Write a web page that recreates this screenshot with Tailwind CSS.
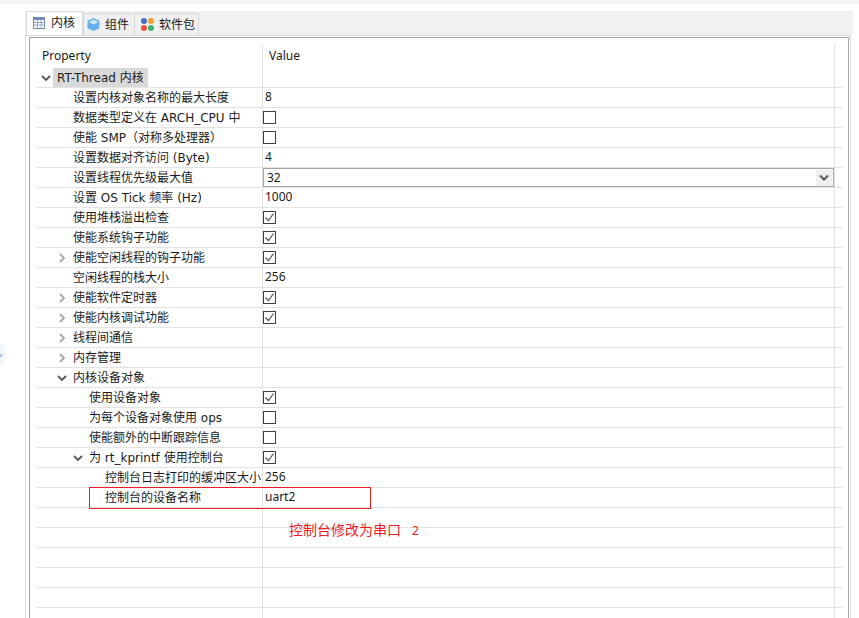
<!DOCTYPE html>
<html lang="zh-CN">
<head>
    <meta charset="UTF-8">
    <title>RT-Thread Settings</title>
    <script src="https://cdn.jsdelivr.net/npm/@tailwindcss/browser@4"></script>
</head>
<body class="bg-white">
<div class="relative w-[859px] h-[618px] overflow-hidden bg-white text-[12px] leading-[20px] text-[#1a1a1a] font-['Noto_Sans','Noto_Sans_CJK_SC',sans-serif]">
    <div class="h-1 bg-[#f4f5fb]"></div>

    <!-- panel -->
    <div class="mt-[7px] ml-[25px] w-[828px] h-[607px] flex flex-col bg-white">
        <!-- tabs -->
        <div class="h-[24px] bg-[#f0f0f0] flex items-end pl-px shrink-0">
            <div class="w-[57px] h-[24px] bg-white border border-b-0 border-[#d9d9d9] flex items-center gap-[6px] pl-[6px] pb-[2px]">
                <svg width="12" height="12" viewBox="0 0 12 12"><rect width="12" height="12" fill="#6f8db8"/><rect x="1" y="3" width="10" height="8" fill="#fff"/><path d="M1 5.500h10M1 8h10M4.500 3v8M8 3v8" stroke="#8fa6c8"/></svg>
                <span>内核</span>
            </div>
            <div class="w-[52px] h-[22px] border border-b-0 border-[#d9d9d9] flex items-center gap-[5px] pl-[3px]">
                <svg width="13" height="13" viewBox="0 0 13 13"><path d="M6.500 .5 12 3v7l-5.500 2.500L1 10V3Z" fill="#63b0ec" stroke="#63b0ec" stroke-linejoin="round"/><path d="M6.500 1.500 11.500 4 6.500 6.500 1.500 4Z" fill="#cfe8fa"/></svg>
                <span>组件</span>
            </div>
            <div class="w-[64px] h-[22px] border border-b-0 border-l-0 border-[#d9d9d9] flex items-center gap-[5px] pl-[6px]">
                <svg width="13" height="13" viewBox="0 0 13 13"><circle cx="3" cy="3" r="3" fill="#3f6fc4"/><circle cx="10" cy="3" r="3" fill="#f2a32c"/><circle cx="3" cy="10" r="3" fill="#e9503f"/><circle cx="10" cy="10" r="3" fill="#3db36b"/></svg>
                <span>软件包</span>
            </div>
        </div>

        <!-- tab body -->
        <div class="flex-1 mr-[2px] border-t border-x border-[#dcdcdc] pl-[3px] pr-px pt-px">
            <div class="h-full border-t border-x border-[#a6a6a6] pl-[6px] pt-[6px]">
                <div class="w-[806px]">
                    <!-- header -->
                    <div class="grid grid-cols-[226px_1px_571px_1px_7px] h-[24px]">
                        <div class="pl-[6px] pt-[2px]">Property</div>
                        <div class="bg-[#e3e3e3]"></div>
                        <div class="pl-[6px] pt-[2px]">Value</div>
                        <div class="bg-[#e3e3e3]"></div>
                        <div></div>
                    </div>
                    <div id="rows"></div>
                    <!-- divider runs on below the last line -->
                    <div class="grid grid-cols-[226px_1px_571px_1px_7px] h-[20px]">
                        <div></div>
                        <div class="bg-[#e3e3e3]"></div>
                        <div></div>
                        <div class="bg-[#e3e3e3]"></div>
                        <div></div>
                    </div>
                </div>
            </div>
        </div>
    </div>

    <!-- faint handle on the left edge -->
    <div class="absolute left-0 top-[344px] w-[5px] h-[22px] rounded-r-full bg-[#f3f6fb]"></div>
    <div class="absolute left-0 top-[354px] w-[2px] h-[3px] bg-[#a9c4e4]"></div>

    <!-- red annotation -->
    <div class="absolute left-[289px] top-[520px] text-[14px] text-[#ec1c24] whitespace-pre">控制台修改为串口   <span class="text-[12px]">2</span></div>
    <div class="absolute left-[89px] top-[487px] w-[282px] h-[22px] border border-[#ec1c24]"></div>
</div>

<script>
    // level, label, type of value, value, expander
    const rows = [
        [0, 'RT-Thread 内核', '', '', 'open'],
        [1, '设置内核对象名称的最大长度', 'text', '8'],
        [1, '数据类型定义在 ARCH_CPU 中', 'box', false],
        [1, '使能 SMP（对称多处理器）', 'box', false],
        [1, '设置数据对齐访问 (Byte)', 'text', '4'],
        [1, '设置线程优先级最大值', 'combo', '32'],
        [1, '设置 OS Tick 频率 (Hz)', 'text', '1000'],
        [1, '使用堆栈溢出检查', 'box', true],
        [1, '使能系统钩子功能', 'box', true],
        [1, '使能空闲线程的钩子功能', 'box', true, 'closed'],
        [1, '空闲线程的栈大小', 'text', '256'],
        [1, '使能软件定时器', 'box', true, 'closed'],
        [1, '使能内核调试功能', 'box', true, 'closed'],
        [1, '线程间通信', '', '', 'closed'],
        [1, '内存管理', '', '', 'closed'],
        [1, '内核设备对象', '', '', 'open'],
        [2, '使用设备对象', 'box', true],
        [2, '为每个设备对象使用 ops', 'box', false],
        [2, '使能额外的中断跟踪信息', 'box', false],
        [2, '为 rt_kprintf 使用控制台', 'box', true, 'open'],
        [3, '控制台日志打印的缓冲区大小', 'text', '256'],
        [3, '控制台的设备名称', 'text', 'uart2'],
        [1, '', '', ''], [1, '', '', ''], [1, '', '', ''], [1, '', '', ''], [1, '', '', '']
    ];

    const chevronOpen = '<svg width="10" height="10" viewBox="0 0 10 10" class="shrink-0 -translate-x-px"><path d="M1 3l4 4 4-4" fill="none" stroke="#555" stroke-width="1.800"/></svg>';
    const chevronClosed = '<svg width="10" height="10" viewBox="0 0 10 10" class="shrink-0 -translate-x-px"><path d="M3 1l4 4-4 4" fill="none" stroke="#a8a8a8" stroke-width="1.800"/></svg>';
    const tick = '<svg width="11" height="11" viewBox="0 0 11 11"><path d="M1.500 5.500l3 3 5-7" fill="none" stroke="#555" stroke-width="1.200"/></svg>';

    function valueCell(type, value) {
        if (type === 'text') return `<div class="pl-[2px] -translate-y-px">${value}</div>`;
        if (type === 'box') return `<div class="pt-[3px]"><div class="w-[13px] h-[13px] border border-[#333f4d] flex items-center justify-center">${value ? tick : ''}</div></div>`;
        if (type === 'combo') return `<div class="relative h-[19px] w-[571px] border border-[#a6a6a6] bg-white pl-[3px] leading-[18px] flex items-center justify-between pr-px">${value}<span class="w-[16px] h-[16px] bg-[#f0f0f0] flex items-center justify-center"><svg width="10" height="8" viewBox="0 0 10 8"><path d="M1 1.500l4 4 4-4" fill="none" stroke="#555" stroke-width="2"/></svg></span></div>`;
        return '<div></div>';
    }

    document.getElementById('rows').innerHTML = rows.map(([level, label, type, value, expander]) => {
        const chevron = expander === 'open' ? chevronOpen : expander === 'closed' ? chevronClosed : '';
        const indent = level === 0 ? 'pl-[6px]' : level === 1 ? 'pl-[22px]' : level === 2 ? 'pl-[38px]' : 'pl-[54px]';
        const text = level === 0
            ? `<span class="ml-px px-[4px] bg-[#d9d9d9] h-[19px] leading-[21px] font-['DejaVu_Sans','Noto_Sans_CJK_SC',sans-serif]">${label}</span>`
            : `<span class="ml-[5px] whitespace-nowrap font-['DejaVu_Sans','Noto_Sans_CJK_SC',sans-serif]">${label}</span>`;
        return `<div class="grid grid-cols-[226px_1px_571px_1px_7px] h-[20px] border-b border-[#e3e3e3] box-border">
            <div class="flex items-center ${indent}"><span class="w-[10px] shrink-0">${chevron}</span>${text}</div>
            <div class="bg-[#e3e3e3]"></div>
            ${valueCell(type, value)}
            <div class="bg-[#e3e3e3]"></div>
            <div></div>
        </div>`;
    }).join('');
</script>
</body>
</html>
